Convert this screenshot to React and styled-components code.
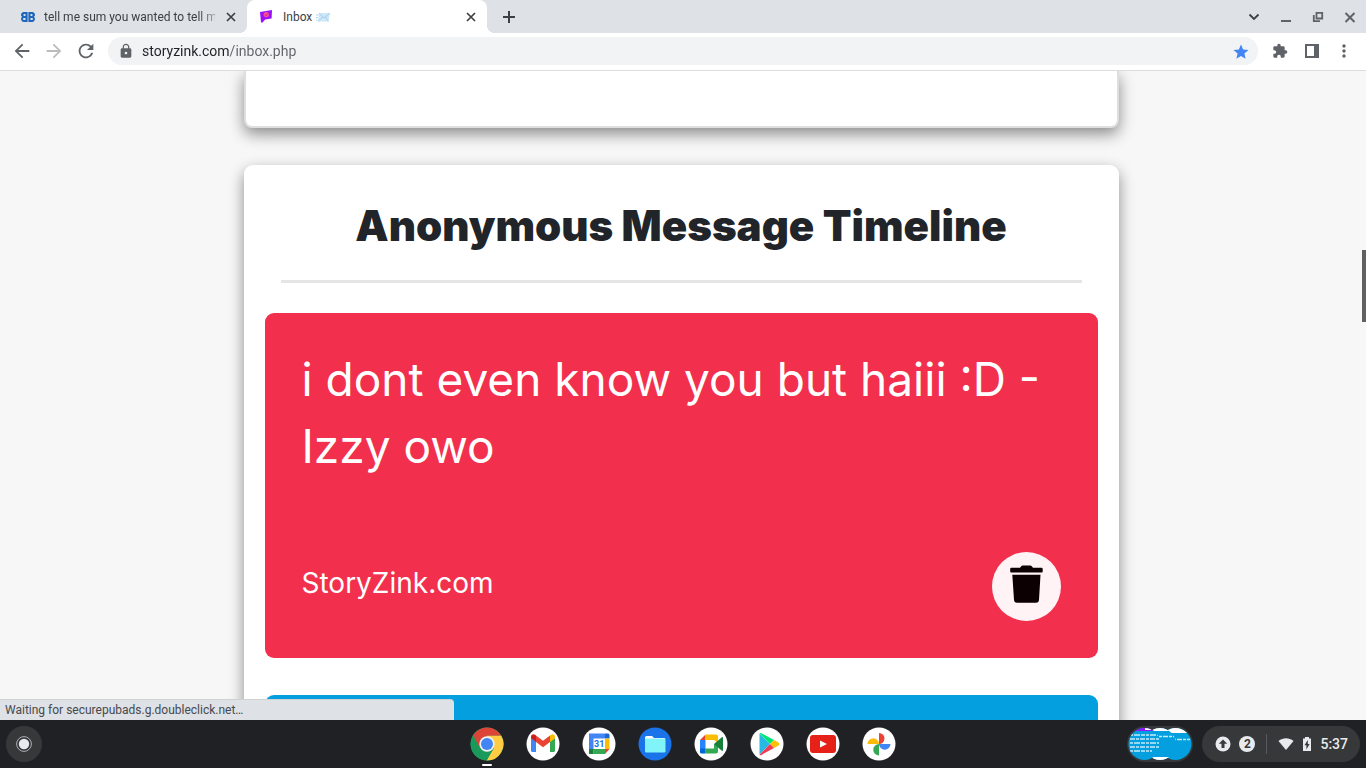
import React from "react";
import styled, { createGlobalStyle } from "styled-components";
import {
  MdArrowBack,
  MdArrowForward,
  MdRefresh,
  MdLock,
  MdStar,
  MdExtension,
  MdMoreVert,
} from "react-icons/md";

const GlobalStyle = createGlobalStyle`
  *, *::before, *::after { box-sizing: border-box; }
  body { margin: 0; font-family: Roboto, "Noto Sans", sans-serif; }
  button { border: 0; padding: 0; background: none; color: inherit; font: inherit; cursor: pointer; }
  svg { display: block; flex: none; }
`;

const Desktop = styled.div`
  display: flex;
  flex-direction: column;
  height: 100vh;
  overflow: hidden;
  background: #f7f7f7;
`;

/* Tab strip */

const TabStrip = styled.header`
  display: flex;
  flex: none;
  height: 33px;
  padding-left: 8px;
  background: #dee1e6;
  color: #3c4043;
`;

const Tab = styled.div`
  position: relative;
  display: flex;
  align-items: center;
  width: ${(p) => (p.$active ? 240 : 239)}px;
  padding: 0 8px 0 12px;
  gap: 8px;
  font-size: 12px;
  line-height: 16px;
  border-radius: 8px 8px 0 0;
  background: ${(p) => (p.$active ? "#fff" : "transparent")};

  &::before,
  &::after {
    content: ${(p) => (p.$active ? '""' : "none")};
    position: absolute;
    bottom: 0;
    width: 8px;
    height: 8px;
  }
  &::before {
    left: -8px;
    background: radial-gradient(circle at 0 0, transparent 8px, #fff 8px);
  }
  &::after {
    right: -8px;
    background: radial-gradient(circle at 100% 0, transparent 8px, #fff 8px);
  }
`;

const TabLabel = styled.span`
  display: flex;
  align-items: center;
  gap: 4px;
  flex: 1;
  min-width: 0;
  white-space: nowrap;
  mask-image: ${(p) =>
    p.$fade ? "linear-gradient(to right, #000 154px, transparent 180px)" : "none"};
`;

const StripButton = styled.button`
  display: grid;
  place-items: center;
  width: ${(p) => p.$size || 16}px;
  height: ${(p) => p.$size || 16}px;
`;

const NewTab = styled.div`
  display: flex;
  align-items: center;
  flex: 1;
  padding-left: 8px;
`;

const WindowControls = styled.div`
  display: flex;
  align-items: center;
  color: #5f6368;
`;

const ControlButton = styled.button`
  display: grid;
  place-items: center;
  width: 32px;
  height: 32px;
`;

/* Toolbar */

const Toolbar = styled.nav`
  display: flex;
  align-items: center;
  flex: none;
  height: 38px;
  padding: 0 6px 1px;
  background: #fff;
  color: #5f6368;
  border-bottom: 1px solid #dcdcdc;
`;

const ToolButton = styled.button`
  display: grid;
  place-items: center;
  width: 32px;
  height: 32px;
  color: ${(p) => (p.disabled ? "#babcbe" : "#5f6368")};
`;

const AddressBar = styled.div`
  display: flex;
  align-items: center;
  flex: 1;
  height: 28px;
  margin: 0 6px;
  padding: 0 10px;
  gap: 8px;
  border-radius: 14px;
  background: #f1f3f4;
`;

const AddressInput = styled.input`
  flex: 1;
  min-width: 0;
  height: 20px;
  padding: 0;
  border: 0;
  outline: 0;
  font: 14px/20px Roboto, "Noto Sans", sans-serif;
  color: transparent;
  background: linear-gradient(to right, #202124 87px, #5f6368 87px);
  background-clip: text;
`;

/* Page */

const Viewport = styled.div`
  position: relative;
  display: flex;
  flex: 1;
  min-height: 0;
`;

const Page = styled.main`
  display: flex;
  flex-direction: column;
  align-items: center;
  flex: 1;
  gap: 37px;
  overflow: hidden;
`;

const Panel = styled.section`
  flex: none;
  width: 100%;
  max-width: 875px;
  background: #fff;
  border-radius: 9px;
  box-shadow: 0 6px 15px rgba(0, 0, 0, 0.44);
`;

const PreviousPanel = styled(Panel)`
  height: 57px;
  border: 2px solid #dedede;
  border-top: 0;
  border-radius: 0 0 8px 8px;
`;

const TimelinePanel = styled(Panel)`
  display: flex;
  flex-direction: column;
  padding: 28px 21px;
`;

const Title = styled.h1`
  margin: 0;
  color: #212529;
  font: 900 42px/66px Inter, "Open Sans", sans-serif;
  text-align: center;
`;

const Divider = styled.hr`
  width: calc(100% - 32px);
  height: 3px;
  margin: 21px 16px 30px;
  border: 0;
  background: #e5e5e5;
`;

const MessageCard = styled.article`
  display: flex;
  flex-direction: column;
  justify-content: space-between;
  min-height: 345px;
  margin-bottom: 37px;
  padding: 33px 37px 37px;
  border-radius: 9px;
  background: ${(p) => p.$color};
  color: #fff;
  font-family: Inter, "Open Sans", sans-serif;
`;

const MessageText = styled.p`
  margin: 0;
  font-size: 46px;
  line-height: 67px;
`;

const CardFooter = styled.footer`
  display: flex;
  align-items: center;
  justify-content: space-between;
`;

const SiteLink = styled.a`
  color: inherit;
  text-decoration: none;
  font-size: 28px;
  line-height: 42px;
  padding-bottom: 8px;
`;

const DeleteButton = styled.button`
  display: grid;
  place-items: center;
  width: 69px;
  height: 69px;
  padding-bottom: 5px;
  border-radius: 50%;
  background: #fff3f5;
  color: #0d0003;
`;

const ScrollTrack = styled.div`
  width: 4px;
  padding-top: 179px;
`;

const ScrollThumb = styled.div`
  height: 72px;
  background: #606060;
`;

const StatusBubble = styled.div`
  position: absolute;
  left: 0;
  bottom: 0;
  width: 33.2%;
  height: 21px;
  padding: 0 5px;
  border-top: 1px solid #cfd1d5;
  border-top-right-radius: 4px;
  background: #dee1e6;
  color: #46494d;
  font-size: 12px;
  line-height: 20px;
`;

/* Shelf */

const Shelf = styled.footer`
  display: grid;
  grid-template-columns: 1fr auto 1fr;
  grid-template-rows: 48px;
  align-items: center;
  flex: none;
  padding: 0 6px;
  background: #202124;
`;

const Launcher = styled.button`
  display: grid;
  place-items: center;
  width: 36px;
  height: 36px;
  border-radius: 50%;
  background: #37383a;
`;

const AppRow = styled.div`
  display: flex;
  gap: 20px;
`;

const AppButton = styled.button`
  position: relative;
  width: 36px;
  height: 48px;
  display: grid;
  place-items: center;

  &::after {
    content: ${(p) => (p.$running ? '""' : "none")};
    position: absolute;
    left: 13px;
    bottom: 2px;
    width: 10px;
    height: 2px;
    border-radius: 1px;
    background: #fff;
  }
`;

const ShelfEnd = styled.div`
  display: flex;
  align-items: center;
  justify-content: flex-end;
  gap: 9px;
`;

const StatusTray = styled.button`
  display: flex;
  align-items: center;
  height: 36px;
  padding: 0 12px 0 13px;
  gap: 8px;
  border-radius: 18px;
  background: #37383a;
  color: #e8eaed;
  font-size: 14px;
  font-weight: 500;
`;

const TrayDivider = styled.span`
  width: 1px;
  height: 20px;
  margin: 0 3px;
  background: #58595c;
`;

const CountBadge = styled.span`
  width: 16px;
  height: 16px;
  border-radius: 50%;
  background: #e8eaed;
  color: #37383a;
  font-size: 12px;
  font-weight: 700;
  line-height: 16px;
  text-align: center;
`;

const Disc = ({ children, fill = "#fff" }) => (
  <svg width="34" height="34" viewBox="0 0 34 34" aria-hidden="true">
    <circle cx="17" cy="17" r="16.5" fill={fill} />
    {children}
  </svg>
);

const ChromeIcon = () => (
  <Disc fill="#1fa15d">
    <path d="M17 17 2.9 8.6A16.5 16.5 0 0 1 31.3 8.8H17z" fill="#db4437" />
    <path d="M17 17 2.9 8.6 10 21z" fill="#db4437" />
    <path d="M17 8.8h14.3A16.5 16.5 0 0 1 16.6 33.5L24 21z" fill="#fc4" />
    <path d="M10 21 2.9 8.6A16.5 16.5 0 0 0 16.6 33.5L23 22z" fill="#1a9a5a" />
    <circle cx="17" cy="17" r="7.7" fill="#f1f1f1" />
    <circle cx="17" cy="17" r="6" fill="#4285f4" />
  </Disc>
);

const GmailIcon = () => (
  <Disc>
    <path d="M5 11v12.5A1.5 1.5 0 0 0 6.5 25H10V14.5z" fill="#4285f4" />
    <path d="M24 14.5V25h3.500a1.500 1.500 0 0 0 1.500-1.500V11z" fill="#34a853" />
    <path d="M24 8.500v6.500l5-3.700V10c0-2.600-2.300-3.400-4-2.200z" fill="#fbbc04" />
    <path d="M10 15V8.500l7 5.200 7-5.200V15l-7 5.200z" fill="#ea4335" />
    <path d="M5 10v1.300l5 3.700V8.500L9 7.800C7.200 6.500 5 7.600 5 10z" fill="#c5221f" />
  </Disc>
);

const CalendarIcon = () => (
  <Disc>
    <path d="M7 6.500h16v5H11.500V23H7z" fill="#4285f4" />
    <path d="M23 6.500h3a1.500 1.500 0 0 1 1.500 1.500v3.500H23z" fill="#1967d2" />
    <path d="M23 11.500h4.500V22H23z" fill="#fbbc04" />
    <path d="M11.500 22H23v5H11.500z" fill="#34a853" />
    <path d="M7 22h4.500v5H7z" fill="#188038" />
    <path d="M23 22h4.500L23 27z" fill="#ea4335" />
    <text x="17.200" y="20" textAnchor="middle" fontFamily="Roboto, sans-serif" fontSize="9" fontWeight="700" fill="#1a73e8">
      31
    </text>
  </Disc>
);

const FilesIcon = () => (
  <Disc fill="#1a73e8">
    <path d="M7 10.500A1.500 1.500 0 0 1 8.500 9H14l2 2h10a1.300 1.300 0 0 1 1.300 1.500H7z" fill="#fff" />
    <rect x="7" y="11.500" width="20.500" height="14" rx="1.300" fill="#80f4f9" />
  </Disc>
);

const MeetIcon = () => (
  <Disc>
    <path d="M6 13h5.500v9H6z" fill="#2684fc" />
    <path d="m6 13 5.500-5.500V13z" fill="#ea4335" />
    <path d="M11.500 7.500H22a2 2 0 0 1 2 2V16l-4-3h-8.500z" fill="#fbbc04" />
    <path d="M11.500 21.500H20V17l4 1v6.500a2 2 0 0 1-2 2H11.500z" fill="#34a853" />
    <path d="M6 21.500h5.500v5H7.500A1.500 1.500 0 0 1 6 25z" fill="#0066da" />
    <path d="m20 17 7.500-6.600c.7-.6 1.500-.3 1.500.6v12c0 .9-.8 1.200-1.500.6z" fill="#188038" />
  </Disc>
);

const PlayIcon = () => (
  <Disc>
    <path d="M9.500 6.500v21L20 17z" fill="#25b9e4" />
    <path d="M9.500 6.300c.5-.5 1.200-.4 2 0L24 13l-4 4z" fill="#00e676" />
    <path d="m24 13 4.500 2.600c1.100.7 1.100 2.100 0 2.800L24 21l-4-4z" fill="#ffc107" />
    <path d="M9.500 27.700 20 17l4 4-12.500 6.900c-.8.400-1.500.3-2-.2z" fill="#f23b52" />
  </Disc>
);

const YoutubeIcon = () => (
  <Disc>
    <rect x="4" y="8" width="26" height="18" rx="3" fill="#e62117" />
    <path d="M14 13.500v7l7-3.500z" fill="#fff" />
  </Disc>
);

const PhotosIcon = () => (
  <Disc>
    <path d="M17 17V6a5.500 5.500 0 0 1 0 11z" fill="#ea4335" />
    <path d="M17 17h11.500a5.700 5.700 0 0 1-11.500 0z" fill="#4285f4" />
    <path d="M17 17v11.500a5.700 5.700 0 0 1 0-11.500z" fill="#34a853" />
    <path d="M17 17H5.500a5.700 5.700 0 0 1 11.500 0z" fill="#fbbc04" />
  </Disc>
);

const apps = [
  { name: "Google Chrome", Icon: ChromeIcon, running: true },
  { name: "Gmail", Icon: GmailIcon },
  { name: "Google Calendar", Icon: CalendarIcon },
  { name: "Files", Icon: FilesIcon },
  { name: "Google Meet", Icon: MeetIcon },
  { name: "Play Store", Icon: PlayIcon },
  { name: "YouTube", Icon: YoutubeIcon },
  { name: "Google Photos", Icon: PhotosIcon },
];

const TwinBIcon = () => (
  <svg width="16" height="16" viewBox="0 0 16 16" aria-hidden="true">
    <path
      fillRule="evenodd"
      fill="#1f67bd"
      d="M7.600 3v10H3.800A3 3 0 0 1 2 7.800 2.700 2.700 0 0 1 4 3zM5.500 5H4.400a1 1 0 0 0 0 2h1.100zM5.500 9H4a1 1 0 0 0 0 2h1.500zM8.400 3H12a2.700 2.700 0 0 1 2 4.800 3 3 0 0 1-1.800 5.200H8.400zM10.500 5v2h1.100a1 1 0 0 0 0-2zM10.500 9v2H12a1 1 0 0 0 0-2z"
    />
  </svg>
);

const FlagIcon = () => (
  <svg width="16" height="16" viewBox="0 0 16 16" aria-hidden="true">
    <path d="M1 3 13 1 12.600 9.500 6.200 10.600 3.500 13.500H2z" fill="#9b10fa" />
    <circle cx="7.300" cy="5.600" r="2.700" fill="#f255a0" />
    <path d="m5.900 5.400 1.300 1.400 1.800-2.500" fill="none" stroke="#e02c50" />
  </svg>
);

const EnvelopeIcon = () => (
  <svg width="14" height="12" viewBox="0 0 14 12" aria-hidden="true">
    <path d="M3 2h11l-1.500 8.500H2z" fill="#cfe8f8" />
    <path d="m3 2 5 5 6-5M2 10.500 6.500 6M12.500 10.500 9.500 6" fill="none" stroke="#8fc3e4" strokeWidth=".7" />
    <path d="M0 4h2.500M0 6.500h2M0 9h1.500" stroke="#a9d5ef" />
  </svg>
);

const CloseIcon = () => (
  <svg width="10" height="10" viewBox="0 0 10 10" stroke="#3c4043" strokeWidth="1.700" aria-hidden="true">
    <path d="m1 1 8 8M9 1 1 9" />
  </svg>
);

const PlusIcon = () => (
  <svg width="12" height="12" viewBox="0 0 12 12" fill="#3c4043" aria-hidden="true">
    <path d="M5 0h2v5h5v2H7v5H5V7H0V5h5z" />
  </svg>
);

const TrashIcon = () => (
  <svg width="33" height="38" viewBox="0 0 33 38" fill="currentColor" aria-hidden="true">
    <path d="M1.500 2.800H10L11.500 1a1.500 1.500 0 0 1 1-.5h8a1.500 1.500 0 0 1 1 .5L23 2.800h8.500a1.200 1.200 0 0 1 1.200 1.200v2.500a1 1 0 0 1-1 1H1.200a1 1 0 0 1-1-1V4a1.200 1.200 0 0 1 1.300-1.200z" />
    <path d="M2.300 9.700h28.200l-1.500 25.100a3 3 0 0 1-3 2.900H7a3 3 0 0 1-3-2.900z" />
  </svg>
);

const snippetRows = [9, 13, 17, 21, 25];

const HoldingSpace = () => (
  <svg width="66" height="36" viewBox="0 0 66 36" aria-hidden="true">
    <rect width="66" height="36" rx="18" fill="#37383a" />
    <defs>
      <clipPath id="thumb-a"><circle cx="17.500" cy="18" r="16" /></clipPath>
      <clipPath id="thumb-b"><circle cx="33" cy="18" r="16" /></clipPath>
      <clipPath id="thumb-c"><circle cx="48.500" cy="18" r="16" /></clipPath>
    </defs>
    <g clipPath="url(#thumb-c)">
      <path d="M32 2h33v32H32z" fill="#039fde" />
      <path d="M32 2h33v5H32z" fill="#fff" />
      <path d="M46 13.500h17" stroke="#c6ebfa" strokeWidth="1.300" strokeDasharray="3 1 5 1" />
    </g>
    <g clipPath="url(#thumb-b)">
      <path d="M17 2h32v32H17z" fill="#039fde" />
      <path d="M17 2h32v3H17zM17 31h32v3H17z" fill="#fff" />
      <path d="M32 10.500h16" stroke="#c6ebfa" strokeWidth="1.300" strokeDasharray="3 1 5 1" />
    </g>
    <g clipPath="url(#thumb-a)">
      <path d="M1 2h33v32H1z" fill="#039fde" />
      <path d="M1 2h33v3H1z" fill="#8d18fa" />
      <path d="M18 2h6v2h-6z" fill="#fff" />
      {snippetRows.map((y, i) => (
        <path key={y} d={`M3 ${y}h${i === 4 ? 22 : 29}`} stroke="#c6ebfa" strokeWidth="1.300" strokeDasharray={i % 2 ? "5 1 3 1" : "3 1 6 1 4 1"} />
      ))}
    </g>
  </svg>
);

const HoldingButton = styled.button`
  width: 66px;
  height: 36px;
`;

export default function App() {
  return (
    <Desktop>
      <GlobalStyle />
      <TabStrip>
        <Tab>
          <TwinBIcon />
          <TabLabel $fade>tell me sum you wanted to tell m</TabLabel>
          <StripButton aria-label="Close first tab"><CloseIcon /></StripButton>
        </Tab>
        <Tab $active>
          <FlagIcon />
          <TabLabel>Inbox <EnvelopeIcon /></TabLabel>
          <StripButton aria-label="Close Inbox tab"><CloseIcon /></StripButton>
        </Tab>
        <NewTab>
          <StripButton $size={28} aria-label="New tab"><PlusIcon /></StripButton>
        </NewTab>
        <WindowControls>
          <ControlButton aria-label="Search tabs">
            <svg width="12" height="8" viewBox="0 0 12 8" fill="none" stroke="#3c4043" strokeWidth="1.800"><path d="m1.500 1.500 4.500 4.500 4.500-4.500" /></svg>
          </ControlButton>
          <ControlButton aria-label="Minimize">
            <svg width="12" height="12" viewBox="0 0 12 12"><path d="M1 9h10v2H1z" fill="currentColor" /></svg>
          </ControlButton>
          <ControlButton aria-label="Restore">
            <svg width="12" height="12" viewBox="0 0 12 12" fill="none" stroke="currentColor" strokeWidth="1.800"><path d="M4.500 1.800h5.700v5.700H4.500zM1.800 4v6.200H8" /></svg>
          </ControlButton>
          <ControlButton aria-label="Close window">
            <svg width="12" height="12" viewBox="0 0 12 12" stroke="currentColor" strokeWidth="2"><path d="m1.500 2 9 9M10.500 2l-9 9" /></svg>
          </ControlButton>
        </WindowControls>
      </TabStrip>

      <Toolbar aria-label="Browser toolbar">
        <ToolButton aria-label="Back"><MdArrowBack size={22} /></ToolButton>
        <ToolButton aria-label="Forward" disabled><MdArrowForward size={22} /></ToolButton>
        <ToolButton aria-label="Reload"><MdRefresh size={22} /></ToolButton>
        <AddressBar>
          <MdLock size={16} />
          <AddressInput aria-label="Address" defaultValue="storyzink.com/inbox.php" />
          <StripButton aria-label="Bookmarked"><MdStar size={18} color="#4285f4" /></StripButton>
        </AddressBar>
        <ToolButton aria-label="Extensions"><MdExtension size={16} /></ToolButton>
        <ToolButton aria-label="Side panel">
          <svg width="14" height="14" viewBox="0 0 14 14" fill="currentColor" fillRule="evenodd"><path d="M0 0h14v14H0zM2 2v10h7V2z" /></svg>
        </ToolButton>
        <ToolButton aria-label="Menu"><MdMoreVert size={20} /></ToolButton>
      </Toolbar>

      <Viewport>
        <Page>
          <PreviousPanel />
          <TimelinePanel>
            <Title>Anonymous Message Timeline</Title>
            <Divider />
            <MessageCard $color="#f22f4c">
              <MessageText>i dont even know you but haiii :D - Izzy owo</MessageText>
              <CardFooter>
                <SiteLink href="#">StoryZink.com</SiteLink>
                <DeleteButton aria-label="Delete message"><TrashIcon /></DeleteButton>
              </CardFooter>
            </MessageCard>
            <MessageCard $color="#039fde" />
          </TimelinePanel>
        </Page>
        <ScrollTrack><ScrollThumb /></ScrollTrack>
        <StatusBubble>Waiting for securepubads.g.doubleclick.net…</StatusBubble>
      </Viewport>

      <Shelf>
        <Launcher aria-label="Launcher">
          <svg width="16" height="16" viewBox="0 0 16 16"><circle cx="8" cy="8" r="7.400" fill="none" stroke="#aeb0b3" /><circle cx="8" cy="8" r="5.200" fill="#e8eaed" /></svg>
        </Launcher>
        <AppRow>
          {apps.map(({ name, Icon, running }) => (
            <AppButton key={name} aria-label={name} $running={running}><Icon /></AppButton>
          ))}
        </AppRow>
        <ShelfEnd>
          <HoldingButton aria-label="Recent files"><HoldingSpace /></HoldingButton>
          <StatusTray aria-label="Status tray, 5:37">
            <svg width="16" height="16" viewBox="0 0 16 16"><circle cx="8" cy="8" r="7.500" fill="#e8eaed" /><path d="m8 3.500 4.200 4.300H9.500V12h-3V7.800H3.800z" fill="#37383a" /></svg>
            <CountBadge>2</CountBadge>
            <TrayDivider />
            <svg width="16" height="16" viewBox="0 0 16 16"><path d="M.5 5C5 1.300 11 1.300 15.500 5L8 14z" fill="currentColor" /></svg>
            <svg width="10" height="16" viewBox="0 0 10 16"><path d="M3 1h4v1.500h2V15H1V2.500h2z" fill="currentColor" /><path d="M5.800 4 2.500 9.300h1.900V13.500l3.200-5.400H5.800z" fill="#37383a" /></svg>
            <span>5:37</span>
          </StatusTray>
        </ShelfEnd>
      </Shelf>
    </Desktop>
  );
}
